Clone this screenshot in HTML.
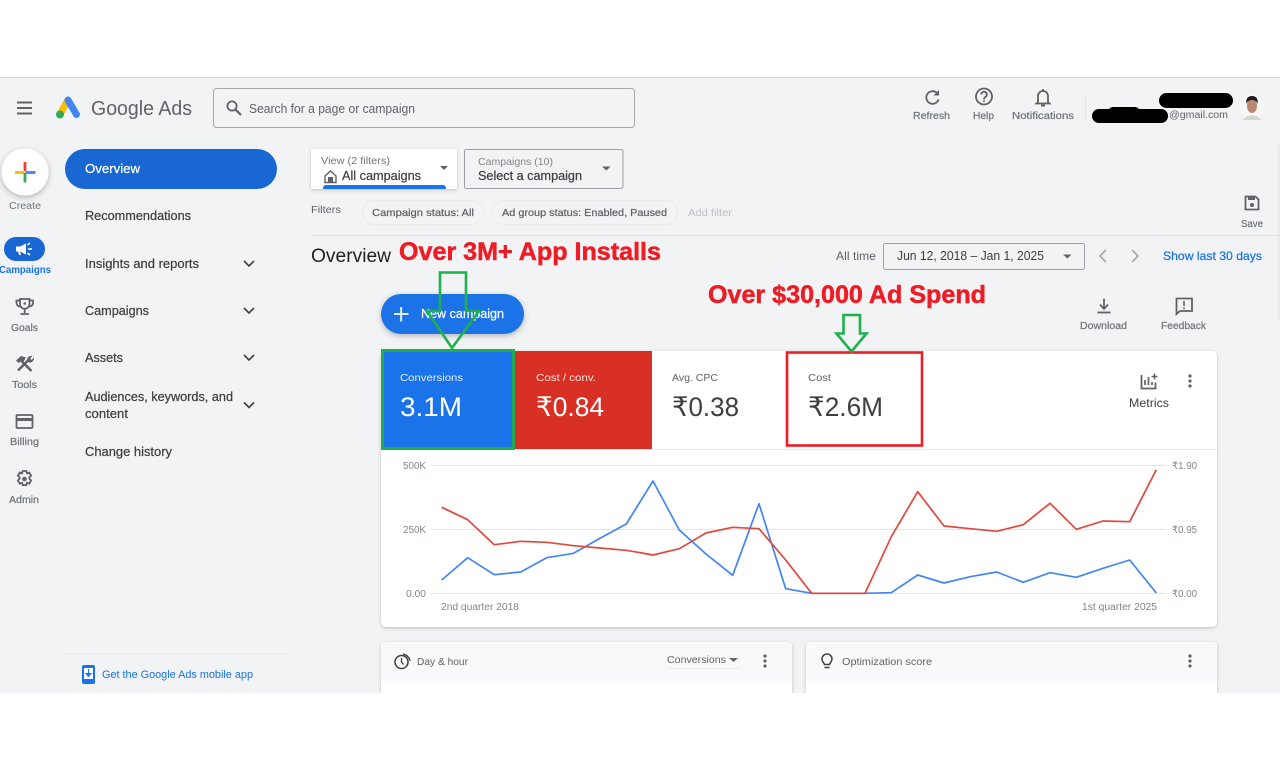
<!DOCTYPE html>
<html lang="en"><head><meta charset="utf-8"><title>Google Ads Overview</title>
<style>
html,body{margin:0;padding:0;background:#fff;width:1280px;height:769px;overflow:hidden}
svg{display:block;filter:blur(.3px)}
text{font-family:"Liberation Sans",sans-serif;white-space:pre}
.m{stroke-width:.22}
.ic{fill:none;stroke:#5f6368;stroke-width:1.8}
.nav{font-size:12.5px;fill:#3c4043;stroke:#3c4043}
.lab{font-size:10px;fill:#70757a;stroke:#70757a}
.ax{font-size:10px;fill:#80868b}
.ml{font-size:10.5px}
.mv{font-size:27px}
</style></head><body>
<svg width="1280" height="769" viewBox="0 0 1280 769" xmlns="http://www.w3.org/2000/svg">
<defs>
<filter id="sh" x="-20%" y="-20%" width="140%" height="150%"><feDropShadow dx="0" dy="1" stdDeviation="1.5" flood-color="#3c4043" flood-opacity=".3"/></filter>
<filter id="sh2" x="-20%" y="-30%" width="140%" height="170%"><feDropShadow dx="0" dy="2" stdDeviation="3" flood-color="#3c4043" flood-opacity=".35"/></filter>
<clipPath id="pg"><rect x="0" y="77" width="1280" height="616"/></clipPath>
</defs>
<rect width="1280" height="769" fill="#fff"/>
<g clip-path="url(#pg)">
<rect x="0" y="77" width="1280" height="616" fill="#f1f3f5"/>
<rect x="0" y="77" width="1280" height="1" fill="#d5d7da"/>

<!-- top bar -->
<path d="M17 102.500h15M17 108h15M17 113.500h15" stroke="#5f6368" stroke-width="2" fill="none"/>
<path d="M60 114L68 100" stroke="#fbbc04" stroke-width="7" stroke-linecap="round"/>
<path d="M68 100L76.500 114.500" stroke="#4285f4" stroke-width="7" stroke-linecap="round"/>
<circle cx="60" cy="114.500" r="4" fill="#34a853"/>
<text x="91" y="115" font-size="20" fill="#5f6368" textLength="101" lengthAdjust="spacingAndGlyphs">Google Ads</text>
<rect x="213.500" y="88.500" width="421" height="39" rx="3" fill="#f1f3f5" stroke="#a4a9ae"/>
<circle cx="232" cy="106" r="4.600" class="ic" style="stroke:#5f6368"/>
<path d="M235.500 109.500L241 115" stroke="#5f6368" stroke-width="2.200"/>
<text x="249" y="113" font-size="12.500" fill="#5f6368" textLength="166" lengthAdjust="spacingAndGlyphs">Search for a page or campaign</text>

<path d="M937 93a6.300 6.300 0 1 0 1.600 6.400" class="ic"/><path d="M933.500 95.500h5.500v-5.500z" fill="#5f6368"/>
<text x="913" y="119" class="lab m" textLength="37" lengthAdjust="spacingAndGlyphs">Refresh</text>
<circle cx="984" cy="96.500" r="8" class="ic"/>
<path d="M981.200 94.500a2.800 2.800 0 1 1 4.300 2.400c-1 .6-1.500 1.100-1.500 2.300" class="ic" stroke-width="1.500"/><circle cx="984" cy="101.200" r="1" fill="#5f6368"/>
<text x="973" y="119" class="lab m" textLength="21" lengthAdjust="spacingAndGlyphs">Help</text>
<path d="M1038 102v-6a5 5 0 0 1 10 0v6l1.500 1.500h-13z" class="ic"/><path d="M1041 105.500h4" stroke="#5f6368" stroke-width="2"/><path d="M1043 89v2" stroke="#5f6368" stroke-width="1.800"/>
<text x="1012" y="119" class="lab m" textLength="62" lengthAdjust="spacingAndGlyphs">Notifications</text>
<rect x="1085" y="96" width="1" height="24" fill="#e2e4e7"/>
<text x="1169" y="118" font-size="10.500" fill="#5f6368" textLength="59" lengthAdjust="spacingAndGlyphs">@gmail.com</text>
<rect x="1159" y="93" width="74" height="15" rx="7.500" fill="#000"/>
<rect x="1092" y="109" width="76" height="14" rx="7" fill="#000"/><rect x="1108" y="107" width="32" height="10" rx="5" fill="#000"/>
<circle cx="1252" cy="107" r="13" fill="#f7f7f6"/>
<ellipse cx="1252" cy="106" rx="5" ry="7" fill="#b98a70"/>
<path d="M1246.500 104c-1-6 2-8 5.500-8s6.500 2 5.500 8c-1-3-3-4-5.500-4s-4.500 1-5.500 4z" fill="#1c1a1c"/>
<path d="M1243 120c2-3 5-4.500 9-4.500s7 1.500 9 4.500z" fill="#d3d6d2"/>

<!-- rail -->
<circle cx="25" cy="172" r="23.500" fill="#fff" filter="url(#sh2)"/>
<path d="M25 162v9" stroke="#ea4335" stroke-width="2.800"/><path d="M15 172.500h9.500" stroke="#fbbc04" stroke-width="2.800"/><path d="M25.500 172.500h10" stroke="#4285f4" stroke-width="2.800"/><path d="M25 173v9.500" stroke="#34a853" stroke-width="2.800"/>
<text x="9" y="209" font-size="10" fill="#70757a" textLength="32" lengthAdjust="spacingAndGlyphs">Create</text>
<rect x="4" y="237" width="41" height="24" rx="12" fill="#1967d2"/>
<path d="M16 246.500h4l6-3v11l-6-3h-4z" fill="#fff"/><path d="M18 251l1 4h2l-1-4z" fill="#fff"/><path d="M28 249h4M27.500 245l2.500-2M27.500 253l2.500 2" stroke="#fff" stroke-width="1.500"/>
<text x="-1" y="273" font-size="10" font-weight="bold" fill="#1a73e8" textLength="52" lengthAdjust="spacingAndGlyphs">Campaigns</text>

<path d="M20 299h9.500v5a4.700 4.700 0 0 1-9.500 0z" class="ic"/><path d="M20 300.500h-3.500v2.500a3.500 3.500 0 0 0 3.500 3.500M29.500 300.500h3.500v2.500a3.500 3.500 0 0 1-3.500 3.500" class="ic" stroke-width="1.400"/><path d="M24.700 309v4M20.500 314h8.500" class="ic"/><circle cx="24.700" cy="303.500" r="1.300" fill="#5f6368"/>
<text x="11" y="331" class="lab m" textLength="27" lengthAdjust="spacingAndGlyphs">Goals</text>
<path d="M18 370.500l10.500-10.500M21.500 361l10 10" stroke="#5f6368" stroke-width="2.600" fill="none"/>
<path d="M16 360.500l5-4.500 5 1.500-3 5-2.500-1-2 1.500zM27.500 361c-1-3 1-5.500 5-5l-2.500 2.500 1.500 1.500 2.500-2.500c.5 3-2 5.500-5 5z" fill="#5f6368"/>
<text x="12" y="388" class="lab m" textLength="25" lengthAdjust="spacingAndGlyphs">Tools</text>
<rect x="16.500" y="415" width="16" height="13" rx="1" class="ic"/><rect x="16" y="418" width="17" height="3" fill="#5f6368"/>
<text x="10" y="445" class="lab m" textLength="29" lengthAdjust="spacingAndGlyphs">Billing</text>
<circle cx="24.500" cy="479" r="2.300" fill="#5f6368"/>
<path d="M22.700 471h3.600l.6 2.300 2.300-.8 1.900 3.100-1.700 1.700v1.500l1.700 1.700-1.900 3.100-2.300-.8-.6 2.300h-3.600l-.6-2.300-2.300.8-1.900-3.100 1.700-1.700v-1.500l-1.700-1.700 1.900-3.100 2.300.8z" class="ic" stroke-width="1.600"/>
<text x="9" y="503" class="lab m" textLength="30" lengthAdjust="spacingAndGlyphs">Admin</text>

<!-- nav -->
<rect x="65" y="149" width="212" height="40" rx="20" fill="#1967d2"/>
<text x="85" y="173" font-size="12.500" fill="#fff" stroke="#fff" class="m" textLength="55" lengthAdjust="spacingAndGlyphs">Overview</text>
<text x="85" y="220" class="nav m" textLength="106" lengthAdjust="spacingAndGlyphs">Recommendations</text>
<text x="85" y="268" class="nav m" textLength="114" lengthAdjust="spacingAndGlyphs">Insights and reports</text>
<text x="85" y="315" class="nav m" textLength="64" lengthAdjust="spacingAndGlyphs">Campaigns</text>
<text x="85" y="362" class="nav m" textLength="38" lengthAdjust="spacingAndGlyphs">Assets</text>
<text x="85" y="401" class="nav m" textLength="148" lengthAdjust="spacingAndGlyphs">Audiences, keywords, and</text>
<text x="85" y="418" class="nav m" textLength="43" lengthAdjust="spacingAndGlyphs">content</text>
<text x="85" y="456" class="nav m" textLength="87" lengthAdjust="spacingAndGlyphs">Change history</text>
<path d="M244 261l5 5 5-5M244 308l5 5 5-5M244 355l5 5 5-5M244 402.500l5 5 5-5" stroke="#3c4043" stroke-width="1.600" fill="none"/>
<rect x="64" y="653.500" width="224" height="1" fill="#e5e7ea"/>
<rect x="82" y="665" width="13" height="19" rx="2" fill="#1a73e8"/><rect x="84" y="668" width="9" height="11" fill="#fff"/><path d="M88.500 669v6M86 673.500l2.500 3 2.500-3z" stroke="#1a73e8" fill="#1a73e8" stroke-width="1"/>
<text x="102" y="678" font-size="11" fill="#1a73e8" textLength="151" lengthAdjust="spacingAndGlyphs">Get the Google Ads mobile app</text>

<!-- filter row -->
<rect x="311" y="149" width="146" height="40" rx="2" fill="#fff" filter="url(#sh)"/>
<text x="321" y="164" font-size="10.500" fill="#70757a" textLength="69" lengthAdjust="spacingAndGlyphs">View (2 filters)</text>
<path d="M325 176l5.500-5 5.500 5v6.500h-11z" fill="none" stroke="#5f6368" stroke-width="1.400"/><rect x="328" y="177" width="5" height="5" fill="#5f6368"/>
<text x="342" y="180" font-size="12.500" fill="#3c4043" stroke="#3c4043" class="m" textLength="79" lengthAdjust="spacingAndGlyphs">All campaigns</text>
<path d="M440 166h8l-4 4z" fill="#5f6368"/>
<path d="M323 189v-1a3 3 0 0 1 3-3h117a3 3 0 0 1 3 3v1z" fill="#1a73e8"/>
<rect x="464.500" y="149.500" width="158.500" height="39" rx="2" fill="#f1f3f5" stroke="#9aa0a6"/>
<text x="478" y="165" font-size="10.500" fill="#80868b" textLength="75" lengthAdjust="spacingAndGlyphs">Campaigns (10)</text>
<text x="478" y="180" font-size="12.500" fill="#3c4043" stroke="#3c4043" class="m" textLength="104" lengthAdjust="spacingAndGlyphs">Select a campaign</text>
<path d="M602 166.500h8.500l-4.200 4z" fill="#5f6368"/>
<text x="311" y="213" font-size="10.500" fill="#5f6368" textLength="30" lengthAdjust="spacingAndGlyphs">Filters</text>
<rect x="362.500" y="200.500" width="121" height="24" rx="12" fill="none" stroke="#e8eaed"/>
<text x="372" y="216" font-size="10.500" fill="#5f6368" stroke="#5f6368" class="m" textLength="102" lengthAdjust="spacingAndGlyphs">Campaign status: All</text>
<rect x="492.500" y="200.500" width="185" height="24" rx="12" fill="none" stroke="#e8eaed"/>
<text x="502" y="216" font-size="10.500" fill="#5f6368" stroke="#5f6368" class="m" textLength="165" lengthAdjust="spacingAndGlyphs">Ad group status: Enabled, Paused</text>
<text x="688" y="216" font-size="10.500" fill="#bdc1c6" textLength="44" lengthAdjust="spacingAndGlyphs">Add filter</text>
<path d="M1245.500 196.500h10l3 3v10h-13z" class="ic" stroke-width="1.500"/><rect x="1248" y="197" width="7" height="3" fill="#5f6368"/><circle cx="1252" cy="205" r="2" fill="#5f6368"/>
<text x="1241" y="227" class="lab m" textLength="22" lengthAdjust="spacingAndGlyphs">Save</text>
<rect x="311" y="235" width="969" height="1" fill="#dfe1e4"/>
<rect x="1278" y="145" width="1.500" height="175" fill="#e2e4e7"/>

<!-- heading row -->
<text x="311" y="262" font-size="19" fill="#202124" textLength="80" lengthAdjust="spacingAndGlyphs">Overview</text>
<text x="836" y="260" font-size="12" fill="#5f6368" textLength="40" lengthAdjust="spacingAndGlyphs">All time</text>
<rect x="883.500" y="243.500" width="201" height="26" rx="2" fill="#f1f3f5" stroke="#9aa0a6"/>
<text x="897" y="260" font-size="12.500" fill="#3c4043" textLength="147" lengthAdjust="spacingAndGlyphs">Jun 12, 2018 – Jan 1, 2025</text>
<path d="M1063 254.500h8.500l-4.200 4z" fill="#5f6368"/>
<path d="M1106 250l-6 6 6 6M1132 250l6 6-6 6" stroke="#a6abb0" stroke-width="1.700" fill="none"/>
<text x="1163" y="260" font-size="12" fill="#1a73e8" stroke="#1a73e8" class="m" textLength="99" lengthAdjust="spacingAndGlyphs">Show last 30 days</text>

<rect x="381" y="294" width="143" height="40" rx="20" fill="#1a73e8" filter="url(#sh2)"/>
<path d="M394 314h14.500M401.200 307v14.500" stroke="#fff" stroke-width="1.800"/>
<text x="421" y="318" font-size="12.500" fill="#fff" stroke="#fff" class="m" textLength="83" lengthAdjust="spacingAndGlyphs">New campaign</text>

<path d="M1104 298.500v10M1100 304.500l4 4.500 4-4.500" stroke="#5f6368" stroke-width="1.700" fill="none"/><path d="M1097.500 312.500h13" stroke="#5f6368" stroke-width="1.800"/>
<text x="1080" y="329" class="lab m" textLength="47" lengthAdjust="spacingAndGlyphs">Download</text>
<path d="M1176.500 298.500h15.500v12.500h-12l-3.500 3z" class="ic" stroke-width="1.600"/><path d="M1184 301v5M1184 307.500v1.800" stroke="#5f6368" stroke-width="1.600"/>
<text x="1161" y="329" class="lab m" textLength="45" lengthAdjust="spacingAndGlyphs">Feedback</text>

<!-- main card -->
<rect x="381" y="351" width="836" height="276" rx="5" fill="#fff" filter="url(#sh)"/>
<path d="M381 351h134v98h-134z" fill="#1a73e8"/>
<rect x="515" y="351" width="137" height="98" fill="#d93025"/>
<rect x="381" y="449" width="836" height="1" fill="#e8eaed"/>
<text x="400" y="381" class="ml" fill="#e8f0fe" textLength="63" lengthAdjust="spacingAndGlyphs">Conversions</text>
<text x="400" y="416" class="mv" fill="#fff" textLength="62" lengthAdjust="spacingAndGlyphs">3.1M</text>
<text x="536" y="381" class="ml" fill="#fce8e6" textLength="60" lengthAdjust="spacingAndGlyphs">Cost / conv.</text>
<text x="536" y="416" class="mv" fill="#fff" textLength="68" lengthAdjust="spacingAndGlyphs">₹0.84</text>
<text x="672" y="381" class="ml" fill="#5f6368" textLength="46" lengthAdjust="spacingAndGlyphs">Avg. CPC</text>
<text x="672" y="416" class="mv" fill="#3c4043" textLength="67" lengthAdjust="spacingAndGlyphs">₹0.38</text>
<text x="808" y="381" class="ml" fill="#5f6368" textLength="23" lengthAdjust="spacingAndGlyphs">Cost</text>
<text x="808" y="416" class="mv" fill="#3c4043" textLength="75" lengthAdjust="spacingAndGlyphs">₹2.6M</text>
<rect x="382.500" y="350.500" width="131" height="98" fill="none" stroke="#1fae4f" stroke-width="3"/>
<rect x="787" y="352.500" width="135" height="93" fill="none" stroke="#ee1c25" stroke-width="2.600"/>

<path d="M1141.500 375v13.500h14v-6" class="ic" stroke-width="1.700"/><path d="M1145 385v-5M1148.500 385v-8M1152 385v-3" stroke="#5f6368" stroke-width="1.700"/><path d="M1154.500 373.500v6M1151.500 376.500h6" stroke="#5f6368" stroke-width="1.500"/>
<text x="1129" y="407" font-size="12" fill="#3c4043" textLength="40" lengthAdjust="spacingAndGlyphs">Metrics</text>
<g fill="#5f6368"><circle cx="1190" cy="376" r="1.600"/><circle cx="1190" cy="381" r="1.600"/><circle cx="1190" cy="386" r="1.600"/></g>

<!-- chart -->
<path d="M431 465.500h735M431 529.500h735M431 593.500h735" stroke="#e3e5e8" stroke-width="1"/>
<text x="403" y="469" class="ax" textLength="23" lengthAdjust="spacingAndGlyphs">500K</text>
<text x="403" y="533" class="ax" textLength="23" lengthAdjust="spacingAndGlyphs">250K</text>
<text x="406" y="597" class="ax" textLength="20" lengthAdjust="spacingAndGlyphs">0.00</text>
<text x="1172" y="469" class="ax" textLength="25" lengthAdjust="spacingAndGlyphs">₹1.90</text>
<text x="1172" y="533" class="ax" textLength="25" lengthAdjust="spacingAndGlyphs">₹0.95</text>
<text x="1172" y="597" class="ax" textLength="25" lengthAdjust="spacingAndGlyphs">₹0.00</text>
<text x="441" y="610" class="ax" textLength="78" lengthAdjust="spacingAndGlyphs">2nd quarter 2018</text>
<text x="1082" y="610" class="ax" textLength="75" lengthAdjust="spacingAndGlyphs">1st quarter 2025</text>
<polyline fill="none" stroke="#4285f4" stroke-width="1.700" stroke-linejoin="round" points="441.700,580 467.700,557.700 494.300,574.700 520.700,572 546.700,557.700 573.700,553.300 600,538.300 626.300,524 653,481 679.300,530 706,554 732.700,575.300 759,503.700 785.700,588.700 811.700,593.300 838,593.300 865,593.300 891.300,592.700 917.700,575 944,583 970.300,576.700 996.700,572 1023.300,582.300 1050,572.700 1076.300,577.300 1103,568.300 1129.700,560 1156.300,593"/>
<polyline fill="none" stroke="#e0483e" stroke-width="1.700" stroke-linejoin="round" points="441.700,507.300 467.700,519.700 494.300,544.700 520.700,541.300 546.700,542.300 573.700,545.700 600,548 626.300,550.300 653,555 679.300,548.700 706,533 732.700,527.300 759,528.700 785.700,560 811.700,593.300 838,593.300 865,593.300 891.300,536.700 917.700,491.700 944,526 970.300,528.700 996.700,531.300 1023.300,524.700 1050,503.300 1076.300,529.300 1103,521 1129.700,521.700 1156.300,469.700"/>

<!-- lower cards -->
<rect x="381" y="642" width="411" height="70" rx="4" fill="#fff" filter="url(#sh)"/>
<path d="M381 681v-35a4 4 0 0 1 4-4h403a4 4 0 0 1 4 4v35z" fill="#f8f9fa"/>
<rect x="806" y="642" width="411" height="70" rx="4" fill="#fff" filter="url(#sh)"/>
<path d="M806 681v-35a4 4 0 0 1 4-4h403a4 4 0 0 1 4 4v35z" fill="#f8f9fa"/>
<circle cx="401.500" cy="662" r="6.500" class="ic" style="stroke:#3c4043;stroke-width:1.500"/><path d="M401.500 658v4l2 2.500" stroke="#3c4043" stroke-width="1.300" fill="none"/><path d="M403 654a8.500 8.500 0 0 1 7 7" stroke="#3c4043" stroke-width="1.300" fill="none"/>
<text x="417" y="665" font-size="10.500" fill="#5f6368" textLength="51" lengthAdjust="spacingAndGlyphs">Day &amp; hour</text>
<text x="667" y="663" font-size="10.500" fill="#5f6368" textLength="59" lengthAdjust="spacingAndGlyphs">Conversions</text>
<path d="M729 658h9l-4.500 4z" fill="#5f6368"/><rect x="667" y="668" width="74" height="1" fill="#eceef0"/>
<g fill="#5f6368"><circle cx="765" cy="656" r="1.600"/><circle cx="765" cy="661" r="1.600"/><circle cx="765" cy="666" r="1.600"/>
<circle cx="1190" cy="656" r="1.600"/><circle cx="1190" cy="661" r="1.600"/><circle cx="1190" cy="666" r="1.600"/></g>
<path d="M824.500 664.500c-.3-1.500-2.500-2.500-2.500-5.500a5 5 0 0 1 10 0c0 3-2.200 4-2.500 5.500z" fill="none" stroke="#3c4043" stroke-width="1.500"/><path d="M824.500 667.500h5" stroke="#3c4043" stroke-width="1.500"/>
<text x="842" y="665" font-size="10.500" fill="#5f6368" textLength="90" lengthAdjust="spacingAndGlyphs">Optimization score</text>

<!-- annotations -->
<path d="M440 272.500h26v38.500h13l-27 37-25-37h13z" fill="none" stroke="#1fb04f" stroke-width="2.600"/>
<path d="M843.500 315h16.500v18.500h6.500l-15 18-15-18h7z" fill="none" stroke="#1fb04f" stroke-width="2.600"/>
<text x="399" y="260" font-size="25" font-weight="bold" fill="#ee1c25" stroke="#ee1c25" stroke-width=".5" textLength="262" lengthAdjust="spacingAndGlyphs">Over 3M+ App Installs</text>
<text x="708" y="303" font-size="25" font-weight="bold" fill="#ee1c25" stroke="#ee1c25" stroke-width=".5" textLength="278" lengthAdjust="spacingAndGlyphs">Over $30,000 Ad Spend</text>
</g>
</svg>
</body></html>
